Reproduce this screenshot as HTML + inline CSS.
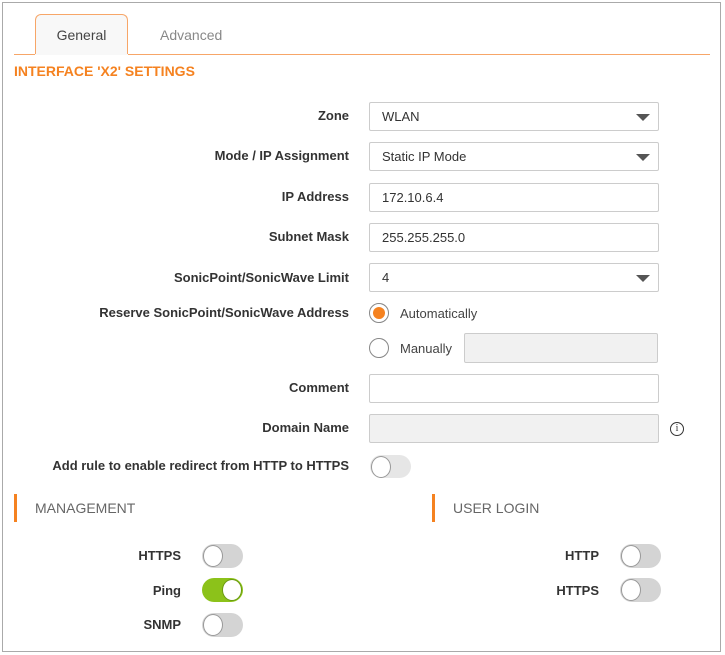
<!DOCTYPE html>
<html><head><style>
*{box-sizing:border-box;margin:0;padding:0}
body{width:725px;height:655px;background:#fff;font-family:"Liberation Sans",sans-serif;position:relative;overflow:hidden}
.frame{position:absolute;left:2px;top:2px;width:719px;height:650px;border:1px solid #aaa}
.abs{position:absolute}
.lbl{position:absolute;right:376px;font-size:13px;font-weight:bold;color:#333;line-height:14px}
.inp{position:absolute;left:369px;width:290px;height:29px;border:1px solid #ccc;border-radius:2px;font-size:13px;color:#333;padding:7px 12px;line-height:14px}
.dd::after{content:"";position:absolute;right:8px;top:11px;border-left:7px solid transparent;border-right:7px solid transparent;border-top:7px solid #555}
.tg{position:absolute;width:41px;height:24px;border-radius:12px;background:#d4d4d4}
.tg::after{content:"";position:absolute;left:1px;top:1px;width:20px;height:22px;border-radius:50%;background:#fff;border:1px solid #999;box-sizing:border-box}
.tg.on{background:#8cc21a}
.tg.on::after{left:auto;right:1px;border-color:#6a9a10}
.sec{position:absolute;font-size:14px;color:#666;border-left:3px solid #f58220;padding-left:18px;height:28px;line-height:28px}
.tl{position:absolute;font-size:13px;font-weight:bold;color:#333;text-align:right}
</style></head><body>
<div class="frame"></div>
<div class="abs" style="left:35px;top:14px;width:93px;height:41px;border:1px solid #f7a668;border-bottom:none;border-radius:6px 6px 0 0;background:#f8f8f8;font-size:14px;color:#444;text-align:center;line-height:40px">General</div>
<div class="abs" style="left:160px;top:27px;font-size:14px;color:#888">Advanced</div>
<div class="abs" style="left:14px;top:54px;width:696px;height:1px;background:#f7a668"></div>
<div class="abs" style="left:35px;top:54px;width:93px;height:1px;background:#f8f8f8"></div>
<div class="abs" style="left:14px;top:63px;font-size:14px;font-weight:bold;color:#f58220">INTERFACE 'X2' SETTINGS</div>

<div class="lbl" style="top:109px">Zone</div>
<div class="inp dd" style="top:102px">WLAN</div>
<div class="lbl" style="top:149px">Mode / IP Assignment</div>
<div class="inp dd" style="top:142px">Static IP Mode</div>
<div class="lbl" style="top:190px">IP Address</div>
<div class="inp" style="top:183px">172.10.6.4</div>
<div class="lbl" style="top:230px">Subnet Mask</div>
<div class="inp" style="top:223px">255.255.255.0</div>
<div class="lbl" style="top:271px">SonicPoint/SonicWave Limit</div>
<div class="inp dd" style="top:263px">4</div>
<div class="lbl" style="top:306px">Reserve SonicPoint/SonicWave Address</div>
<div class="abs" style="left:369px;top:303px;width:20px;height:20px;border-radius:50%;border:1px solid #888;background:#fff"><div style="position:absolute;left:3px;top:3px;width:12px;height:12px;border-radius:50%;background:#f58220"></div></div>
<div class="abs" style="left:400px;top:306px;font-size:13px;color:#444">Automatically</div>
<div class="abs" style="left:369px;top:338px;width:20px;height:20px;border-radius:50%;border:1px solid #888"></div>
<div class="abs" style="left:400px;top:341px;font-size:13px;color:#444">Manually</div>
<div class="abs" style="left:464px;top:333px;width:194px;height:30px;border:1px solid #ccc;border-radius:2px;background:#f1f1f1"></div>
<div class="lbl" style="top:381px">Comment</div>
<div class="inp" style="top:374px"></div>
<div class="lbl" style="top:421px">Domain Name</div>
<div class="inp" style="top:414px;background:#f1f1f1"></div>
<div class="abs" style="left:670px;top:422px;width:14px;height:14px;border-radius:50%;border:1px solid #333;font-size:10px;font-family:'Liberation Serif',serif;text-align:center;line-height:12px;color:#333">i</div>
<div class="lbl" style="top:459px">Add rule to enable redirect from HTTP to HTTPS</div>
<div class="tg" style="left:370px;top:455px;background:#e6e6e6;height:23px"></div>

<div class="sec" style="left:14px;top:494px">MANAGEMENT</div>
<div class="sec" style="left:432px;top:494px">USER LOGIN</div>

<div class="tl" style="right:544px;top:548px">HTTPS</div>
<div class="tg" style="left:202px;top:544px"></div>
<div class="tl" style="right:544px;top:583px">Ping</div>
<div class="tg on" style="left:202px;top:578px"></div>
<div class="tl" style="right:544px;top:617px">SNMP</div>
<div class="tg" style="left:202px;top:613px"></div>
<div class="tl" style="right:126px;top:548px">HTTP</div>
<div class="tg" style="left:620px;top:544px"></div>
<div class="tl" style="right:126px;top:583px">HTTPS</div>
<div class="tg" style="left:620px;top:578px"></div>
</body></html>
